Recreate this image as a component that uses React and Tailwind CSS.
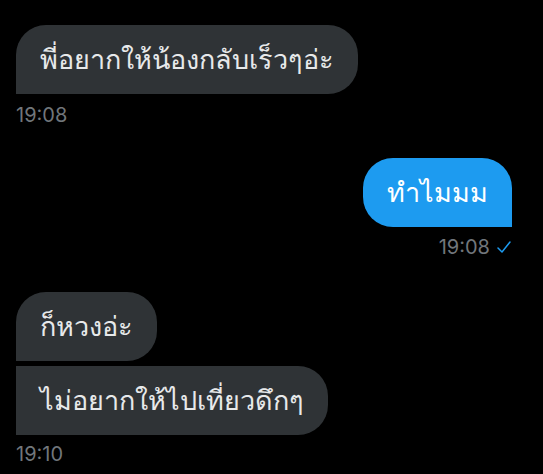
const font = { fontFamily: '"Noto Sans", "DejaVu Sans", sans-serif' }
const timeFont = { fontFamily: 'Inter, "Liberation Sans", sans-serif' }

function Bubble({ text, mine, corners }) {
  return (
    <div
      className={`h-[69px] flex items-center px-6 text-[27px] ${mine ? 'bg-[#1d9bf0] text-white' : 'bg-[#2f3336] text-[#e7e9ea]'} ${corners}`}
    >
      {text}
    </div>
  )
}

function Time({ children, className = '' }) {
  return (
    <div className={`text-[20px] leading-[28px] text-[#71767b] ${className}`} style={timeFont}>
      {children}
    </div>
  )
}

export default function App() {
  return (
    <div className="w-[543px] h-[474px] bg-black overflow-hidden pt-[25px] pl-4 pr-[31px]" style={font}>
      <div className="flex flex-col items-start">
        <Bubble text="พี่อยากให้น้องกลับเร็วๆอ่ะ" corners="rounded-[30px] rounded-bl-none" />
        <Time className="mt-[7px]">19:08</Time>
      </div>

      <div className="flex flex-col items-end mt-[29px]">
        <Bubble text="ทำไมมม" mine corners="rounded-[30px] rounded-br-none" />
        <Time className="mt-[6px] flex items-center gap-1.5">
          <span>19:08</span>
          <svg width="16" height="16" viewBox="0 0 16 16" fill="none" stroke="#1d9bf0" strokeWidth="1.5" strokeLinecap="round" strokeLinejoin="round">
            <path d="M2 9l4 4 8-10" />
          </svg>
        </Time>
      </div>

      <div className="flex flex-col items-start mt-[31px] gap-[5px]">
        <Bubble text="ก็หวงอ่ะ" corners="rounded-[30px] rounded-bl-none" />
        <Bubble text="ไม่อยากให้ไปเที่ยวดึกๆ" corners="rounded-[30px] rounded-l-none" />
        <Time>19:10</Time>
      </div>
    </div>
  )
}
